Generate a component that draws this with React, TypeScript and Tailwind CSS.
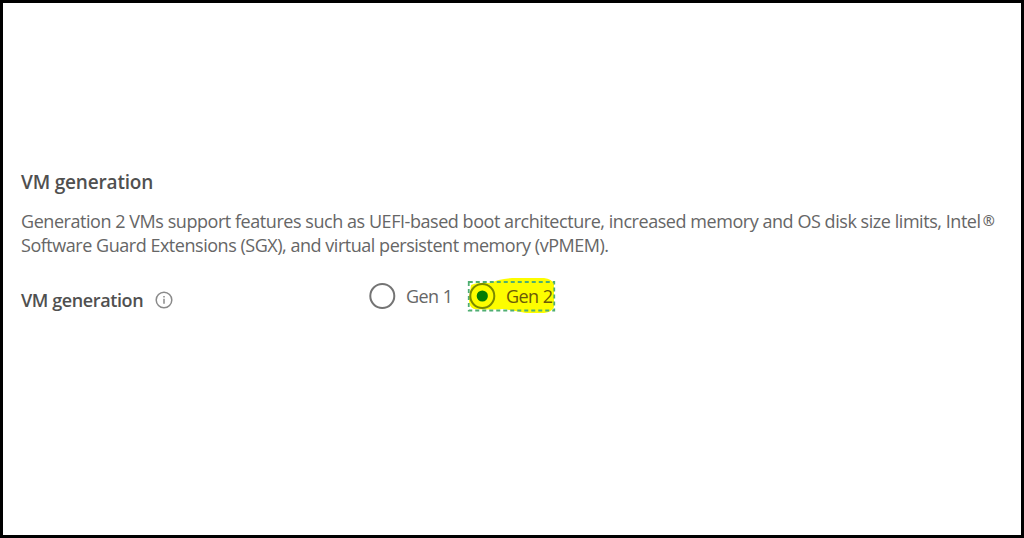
import clsx from "clsx";

interface GenOptionProps {
  label: string;
  checked?: boolean;
}

function GenOption({ label, checked = false }: GenOptionProps) {
  return (
    <label
      className={clsx(
        "relative flex h-[30px] items-center",
        checked ? "ml-[13px] w-[87px]" : "w-[86px]"
      )}
    >
      {checked && (
        <svg className="absolute -left-1 -top-[5px]" width="94" height="42" viewBox="0 0 94 42">
          <path
            d="M7 9 Q14 6 26 7 Q34 3 48 2 L80 2 Q88 3 90 8 L90 31 Q88 36 80 37 L62 37 Q50 35 40 33 Q26 34 10 33 Q5 31 5 24 Z"
            fill="#fdfd00"
          />
          <rect
            x="4.75"
            y="6"
            width="85.5"
            height="28.5"
            fill="none"
            stroke="#4fae72"
            strokeWidth="1.8"
            strokeDasharray="4 3"
          />
        </svg>
      )}
      <svg
        className={clsx("relative shrink-0", checked && "ml-[1px]")}
        width="27"
        height="27"
        viewBox="0 0 27 27"
      >
        <circle
          cx="13.3"
          cy="13"
          r="12"
          fill={checked ? "none" : "#fff"}
          stroke={checked ? "#7a8a00" : "#747474"}
          strokeWidth="2"
        />
        {checked && <circle cx="13.3" cy="13" r="5.6" fill="#047c04" />}
      </svg>
      <span
        className={clsx(
          "relative ml-[10px] whitespace-nowrap text-[18px] tracking-[-0.55px]",
          checked ? "text-[#6b5a08]" : "text-[#666]"
        )}
      >
        {label}
      </span>
    </label>
  );
}

function InfoIcon() {
  return (
    <svg className="ml-3 -mt-[2px]" width="18" height="18" viewBox="0 0 18 18">
      <circle cx="9" cy="9" r="7.8" fill="none" stroke="#8a8a8a" strokeWidth="1.5" />
      <path d="M9 7.8V12.8M9 5V6.6" stroke="#8a8a8a" strokeWidth="1.5" />
    </svg>
  );
}

export default function App() {
  return (
    <main className="h-[538px] w-[1024px] overflow-hidden border-[3px] border-black bg-white pl-[18px] pt-[167px] font-['Open_Sans',sans-serif] text-[#666]">
      <h2 className="h-6 text-[19px] font-semibold leading-6 tracking-[-0.18px] text-[#505050]">
        VM generation
      </h2>
      <p className="mt-4 whitespace-nowrap text-[18px] leading-[23.5px]">
        <span className="block tracking-[-0.45px]">
          Generation 2 VMs support features such as UEFI-based boot architecture, increased memory and OS disk size limits, Intel
          <span className="relative -top-[2px] ml-[2px] text-[14.5px] font-semibold leading-none">®</span>
        </span>
        <span className="block tracking-[-0.47px]">
          Software Guard Extensions (SGX), and virtual persistent memory (vPMEM).
        </span>
      </p>
      <div className="mt-6 flex">
        <div className="flex h-[39px] w-[348px] items-center">
          <span className="text-[18px] font-semibold tracking-[-0.4px] text-[#505050]">VM generation</span>
          <InfoIcon />
        </div>
        <GenOption label="Gen 1" />
        <GenOption label="Gen 2" checked />
      </div>
    </main>
  );
}
